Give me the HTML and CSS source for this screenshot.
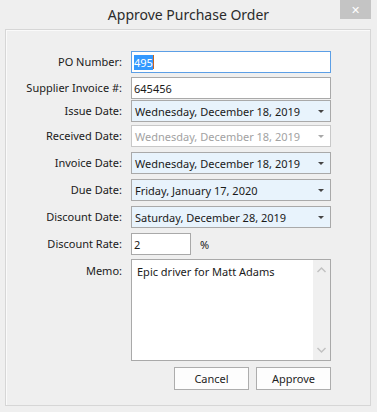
FILE: index.html
```html
<!DOCTYPE html>
<html lang="en">
<head>
  <meta charset="UTF-8">
  <title>Approve Purchase Order</title>
  <meta name="viewport" content="width=device-width, initial-scale=1">
  <link rel="stylesheet" href="styles.css">
</head>
<body>
  <div class="window">
    <div class="titlebar">
      <span></span>
      <span class="title">Approve Purchase Order</span>
      <span class="close">&#x2715;</span>
    </div>
    <div class="panel">
      <div class="form">
        <label>PO Number:</label>
        <div class="field focused"><span class="sel">495</span><span class="caret"></span></div>

        <label>Supplier Invoice #:</label>
        <div class="field">645456</div>

        <label>Issue Date:</label>
        <div class="field combo">Wednesday, December 18, 2019<span class="arrow"></span></div>

        <label>Received Date:</label>
        <div class="field combo disabled">Wednesday, December 18, 2019<span class="arrow"></span></div>

        <label>Invoice Date:</label>
        <div class="field combo">Wednesday, December 18, 2019<span class="arrow"></span></div>

        <label>Due Date:</label>
        <div class="field combo">Friday, January 17, 2020<span class="arrow"></span></div>

        <label>Discount Date:</label>
        <div class="field combo">Saturday, December 28, 2019<span class="arrow"></span></div>

        <label>Discount Rate:</label>
        <div class="rate">
          <div class="field small">2</div>
          <span class="pct">%</span>
        </div>

        <label class="top">Memo:</label>
        <div class="field memo">
          <div class="memo-text">Epic driver for Matt Adams</div>
          <div class="scroll">
            <svg width="17" height="100" viewBox="0 0 17 100">
              <polyline points="4.5,12 8.5,8 12.5,12" fill="none" stroke="#c2c2c2" stroke-width="1.5"/>
              <polyline points="4.5,88 8.5,92 12.5,88" fill="none" stroke="#c2c2c2" stroke-width="1.5"/>
            </svg>
          </div>
        </div>

        <span></span>
        <div class="actions">
          <button type="button">Cancel</button>
          <button type="button">Approve</button>
        </div>
      </div>
    </div>
  </div>
</body>
</html>
```

FILE: styles.css
```css
html, body { margin: 0; padding: 0; }
body { background: #efefef; font-family: "Noto Sans", "Open Sans", sans-serif; font-size: 11px; color: #1a1a1a; width: 377px; height: 412px; overflow: hidden; }

.window { display: flex; flex-direction: column; height: 412px; }
.titlebar { display: grid; grid-template-columns: 1fr auto 1fr; align-items: start; height: 29px; }
.title { font-size: 14px; color: #2b2b2b; padding-top: 5px; }
.close { justify-self: end; margin-right: 6px; width: 31px; height: 19px; background: #c4c4c4; color: #fff; font-size: 11px; display: flex; align-items: center; justify-content: center; }

.panel { margin: 0 6px 6px 5px; flex: 1; border: 1px solid #d6d6d6; box-shadow: inset 1px 1px 0 #fafafa; }

/* row pitch follows the original dialog, which is not quite even */
.form { display: grid; grid-template-columns: 117px 200px; grid-template-rows: 26px 23px 25px 27px 27px 27px 27px 26px 108px auto; column-gap: 8px; padding-top: 21px; }
.form label { text-align: right; align-self: start; height: 22px; line-height: 22px; padding-right: 1px; }
.form label.top { line-height: normal; height: auto; padding-top: 4px; }
.form > .field, .form > .rate { align-self: start; }

.field { position: relative; height: 22px; box-sizing: border-box; border: 1px solid #a9a9a9; background: #fff; padding: 0 2px; display: flex; align-items: center; white-space: nowrap; }
.field.focused { border-color: #5c9fe6; }
.sel { background: #3399ff; color: #fff; }
.caret { width: 1px; height: 14px; background: #c8641c; }

.combo { background: #e8f3fc; padding-left: 3px; }
.combo.disabled { background: #fff; color: #a2a2a2; border-color: #c8c8c8; }
.arrow { position: absolute; right: 6px; top: 9px; border-left: 3px solid transparent; border-right: 3px solid transparent; border-top: 3px solid #444; }
.disabled .arrow { border-top-color: #a8a8a8; }

.rate { display: flex; align-items: center; }
.small { width: 60px; }
.pct { margin-left: 9px; }

.memo { height: 102px; align-items: stretch; padding: 0; }
.memo-text { flex: 1; padding: 4px 5px; }
.scroll { width: 17px; background: #f0f0f0; }
.scroll svg { display: block; }

.actions { display: flex; justify-content: flex-end; gap: 7px; }
.actions button { width: 75px; height: 23px; background: #fdfdfd; border: 1px solid #adadad; font-family: inherit; font-size: 11px; color: #1e1e1e; padding: 0; }
```
